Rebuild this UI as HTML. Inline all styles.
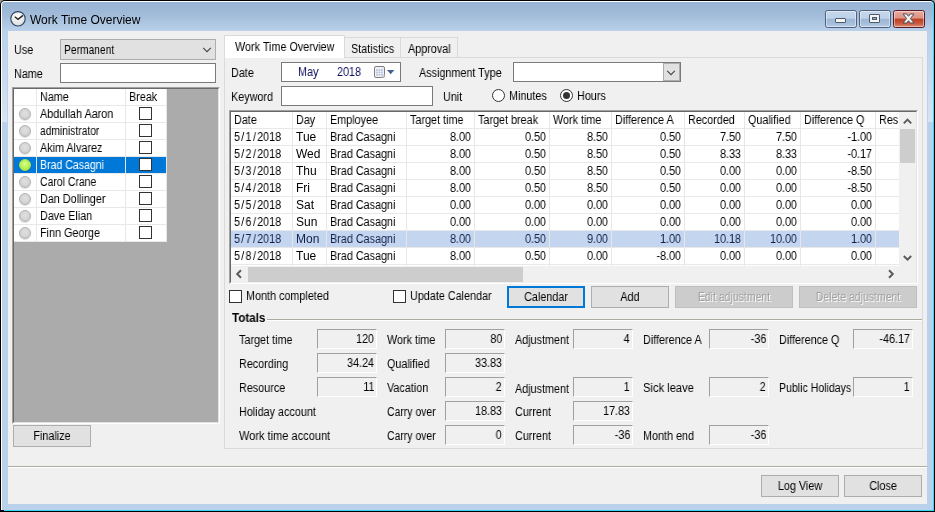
<!DOCTYPE html><html><head><meta charset="utf-8"><title>Work Time Overview</title><style>
html,body{margin:0;padding:0;}
body{width:935px;height:512px;overflow:hidden;background:#9a9a9a;position:relative;font-family:"Liberation Sans",sans-serif;font-size:11px;color:#000;}
div,span{position:absolute;box-sizing:border-box;white-space:nowrap;}
.t{will-change:transform;line-height:13px;height:13px;font-size:12px;transform:scaleX(.9);transform-origin:0 50%;}
.r{text-align:right;transform-origin:100% 50%;}
.c{text-align:center;transform-origin:50% 50%;left:0;width:100%;}
.btn{background:#e1e1e1;border:1px solid #adadad;}
.btn .t{top:4px;}
.t i{font-style:normal;margin:0 1.4px;}
.dis{background:#cccccc;border:1px solid #bfbfbf;color:#a0a0a0;text-shadow:1px 1px 0 #fff;}
.dis .t{transform:scaleX(.875);}
.sunk .t{right:2px;top:3px;}
.sunk{background:#f0f0f0;border-top:1px solid #a0a0a0;border-left:1px solid #a0a0a0;border-bottom:1px solid #fff;border-right:1px solid #fff;text-align:right;padding-right:3px;height:20px;width:60px;}
.inp{background:#fff;border:1px solid #7a7a7a;}
.cb{width:13px;height:13px;background:#fff;border:1px solid #333;}
.vl{width:1px;background:#e6e6e6;}
.hl{height:1px;background:#e8e8e8;}
.dot{width:12px;height:12px;border-radius:50%;background:radial-gradient(circle at 50% 42%,#e0e0e0 0,#d6d6d6 50%,#c0c0c0 100%);border:1px solid #b3b3b3;box-shadow:0 1px 1px rgba(0,0,0,.12);}
</style></head><body>
<div style="left:0;top:0;width:935px;height:512px;background:#000;border-radius:5px 5px 0 0;"></div>
<div style="left:4px;top:1px;width:930px;height:510px;background:#37d7fa;border-radius:0 4px 0 0;"></div>
<div style="left:1px;top:1px;width:932px;height:509px;background:#fff;border-radius:4px 4px 0 0;"></div>
<div style="left:2px;top:2px;width:931px;height:508px;background:linear-gradient(#98b3d4 0,#a1bbd9 13px,#b9d1ea 29px,#b9d1ea 100%);border-radius:3px 3px 0 0;"></div>
<div style="left:2px;top:31px;width:5px;height:91px;background:linear-gradient(rgba(255,255,255,0),rgba(255,255,255,.42));"></div>
<div style="left:928px;top:31px;width:5px;height:91px;background:linear-gradient(rgba(255,255,255,0),rgba(255,255,255,.42));"></div>
<div style="left:8px;top:31px;width:919px;height:473px;background:#f0f0f0;"></div>
<svg style="position:absolute;left:9px;top:10px" width="18" height="18" viewBox="0 0 18 18"><defs><radialGradient id="cg" cx="50%" cy="35%" r="70%"><stop offset="0" stop-color="#fff"/><stop offset="1" stop-color="#d8d8d8"/></radialGradient></defs><circle cx="9" cy="8.8" r="7.2" fill="url(#cg)" stroke="#2b4560" stroke-width="1.1"/><path d="M5.8 6.8 L9 9.3 L14 5.4" fill="none" stroke="#222" stroke-width="1.4"/></svg>
<div class="t" style="left:30px;top:12px;font-size:12px;line-height:16px;height:16px;transform:none;">Work Time Overview</div>
<div style="left:825px;top:10px;width:32px;height:18px;border:1px solid #50607c;border-radius:2.5px;background:linear-gradient(#c4d7ec 0,#bdd1e9 46%,#9cb6d6 50%,#a5bedb 78%,#b7cde7 100%);box-shadow:inset 0 0 0 1px rgba(255,255,255,.45);"></div>
<div style="left:859px;top:10px;width:32px;height:18px;border:1px solid #50607c;border-radius:2.5px;background:linear-gradient(#c4d7ec 0,#bdd1e9 46%,#9cb6d6 50%,#a5bedb 78%,#b7cde7 100%);box-shadow:inset 0 0 0 1px rgba(255,255,255,.45);"></div>
<div style="left:893px;top:10px;width:32px;height:18px;border:1px solid #5a1a24;border-radius:2.5px;background:linear-gradient(#e9a99b 0,#dd9384 45%,#c03e22 50%,#c8553a 75%,#d98a74 100%);box-shadow:inset 0 0 0 1px rgba(255,255,255,.45);"></div>
<div style="left:835px;top:18px;width:11px;height:5px;background:#f4f4f4;border:1px solid #4c5a6c;border-radius:1px;"></div>
<div style="left:869px;top:14px;width:11px;height:9px;background:#f4f4f4;border:1px solid #4c5a6c;border-radius:1px;"></div>
<div style="left:872px;top:17px;width:5px;height:3px;background:#8eabcd;border:1px solid #4c5a6c;"></div>
<svg style="position:absolute;left:902px;top:13px" width="14" height="12" viewBox="0 0 14 12"><path d="M1 1 h3.7 l1.8 2.3 l1.8 -2.3 h3.7 l-3.6 4.5 l3.6 4.5 h-3.7 l-1.8 -2.3 l-1.8 2.3 h-3.7 l3.6 -4.5 z" fill="#f6f6f6" stroke="#4a4f60" stroke-width="1"/></svg>
<div class="t" style="left:14px;top:44px;">Use</div>
<div style="left:60px;top:39px;width:156px;height:21px;background:#e1e1e1;border:1px solid #adadad;"></div>
<div class="t" style="left:64px;top:44px;transform:scaleX(.855);">Permanent</div>
<svg style="position:absolute;left:202px;top:46px" width="11" height="7" viewBox="0 0 11 7"><path d="M1.2 1.8 L5 5.6 L8.8 1.8" fill="none" stroke="#444" stroke-width="1.1"/></svg>
<div class="t" style="left:14px;top:68px;">Name</div>
<div class="inp" style="left:60px;top:63px;width:156px;height:20px;"></div>
<div style="left:12px;top:87px;width:208px;height:337px;background:#ababab;border-top:1px solid #a0a0a0;border-left:1px solid #a0a0a0;border-bottom:1px solid #fff;border-right:1px solid #fff;"></div>
<div style="left:13px;top:88px;width:206px;height:335px;border-top:1px solid #696969;border-left:1px solid #696969;border-bottom:1px solid #e3e3e3;border-right:1px solid #e3e3e3;"></div>
<div style="left:14px;top:89px;width:153px;height:153px;background:#fff;"></div>
<div style="left:14px;top:157px;width:152px;height:16px;background:#0078d7;"></div>
<div class="vl" style="left:36px;top:89px;height:153px;"></div>
<div class="vl" style="left:125px;top:89px;height:153px;"></div>
<div class="vl" style="left:166px;top:89px;height:153px;"></div>
<div class="hl" style="left:14px;top:105px;width:153px;"></div>
<div class="hl" style="left:14px;top:122px;width:153px;"></div>
<div class="hl" style="left:14px;top:139px;width:153px;"></div>
<div class="hl" style="left:14px;top:156px;width:153px;"></div>
<div class="hl" style="left:14px;top:173px;width:153px;"></div>
<div class="hl" style="left:14px;top:190px;width:153px;"></div>
<div class="hl" style="left:14px;top:207px;width:153px;"></div>
<div class="hl" style="left:14px;top:224px;width:153px;"></div>
<div class="hl" style="left:14px;top:241px;width:153px;"></div>
<div class="t" style="left:40px;top:91px;">Name</div>
<div class="t" style="left:129px;top:91px;">Break</div>
<div class="dot" style="left:19px;top:108px;"></div>
<div class="t" style="left:40px;top:108px;">Abdullah Aaron</div>
<div class="cb" style="left:139px;top:107px;"></div>
<div class="dot" style="left:19px;top:125px;"></div>
<div class="t" style="left:40px;top:125px;transform:scaleX(.856);">administrator</div>
<div class="cb" style="left:139px;top:124px;"></div>
<div class="dot" style="left:19px;top:142px;"></div>
<div class="t" style="left:40px;top:142px;">Akim Alvarez</div>
<div class="cb" style="left:139px;top:141px;"></div>
<div class="dot" style="left:19px;top:159px;background:radial-gradient(circle at 50% 40%,#d8ff8a 0,#b6f04e 60%,#98d934 100%);border-color:#a8e04a;"></div>
<div class="t" style="left:40px;top:159px;color:#fff;transform:scaleX(.88);">Brad Casagni</div>
<div class="cb" style="left:139px;top:158px;"></div>
<div class="dot" style="left:19px;top:176px;"></div>
<div class="t" style="left:40px;top:176px;transform:scaleX(.87);">Carol Crane</div>
<div class="cb" style="left:139px;top:175px;"></div>
<div class="dot" style="left:19px;top:193px;"></div>
<div class="t" style="left:40px;top:193px;">Dan Dollinger</div>
<div class="cb" style="left:139px;top:192px;"></div>
<div class="dot" style="left:19px;top:210px;"></div>
<div class="t" style="left:40px;top:210px;">Dave Elian</div>
<div class="cb" style="left:139px;top:209px;"></div>
<div class="dot" style="left:19px;top:227px;"></div>
<div class="t" style="left:40px;top:227px;">Finn George</div>
<div class="cb" style="left:139px;top:226px;"></div>
<div class="btn" style="left:13px;top:425px;width:78px;height:22px;"><span class="t c">Finalize</span></div>
<div style="left:224px;top:57px;width:699px;height:392px;background:#f0f0f0;border:1px solid #dadada;"></div>
<div style="left:344px;top:37px;width:57px;height:21px;background:#f0f0f0;border:1px solid #dadada;"></div>
<div style="left:400px;top:37px;width:58px;height:21px;background:#f0f0f0;border:1px solid #dadada;"></div>
<div style="left:224px;top:35px;width:121px;height:23px;background:#fff;border:1px solid #dadada;border-bottom:none;"></div>
<div class="t" style="left:235px;top:41px;">Work Time Overview</div>
<div class="t" style="left:351px;top:43px;">Statistics</div>
<div class="t" style="left:408px;top:43px;">Approval</div>
<div class="t" style="left:231px;top:67px;">Date</div>
<div class="inp" style="left:281px;top:62px;width:120px;height:20px;"></div>
<div class="t" style="left:298px;top:66px;color:#0c0c5c;">May</div>
<div class="t" style="left:337px;top:66px;color:#0c0c5c;">2018</div>
<svg style="position:absolute;left:373px;top:65px" width="24" height="14" viewBox="0 0 24 14"><rect x="1.5" y="1.5" width="10" height="11" rx="1.5" fill="#eef1f8" stroke="#857a7c"/><rect x="3.2" y="4.2" width="6.6" height="6.3" fill="#b3c0da"/><path d="M5.3 4v7M7.6 4v7M3 6.3h7M3 8.4h7" stroke="#eef1f8" stroke-width=".8"/><path d="M8 12.5 L11.5 9 V12.5 Z" fill="#cfc8c8"/><path d="M14 5 h7.4 l-3.7 4.2 z" fill="#44608f"/></svg>
<div class="t" style="left:419px;top:67px;">Assignment Type</div>
<div class="inp" style="left:513px;top:62px;width:168px;height:20px;"></div>
<div style="left:663px;top:63px;width:17px;height:18px;background:#e1e1e1;border:1px solid #adadad;"></div>
<svg style="position:absolute;left:666px;top:69px" width="11" height="7" viewBox="0 0 11 7"><path d="M1.2 1.8 L5 5.6 L8.8 1.8" fill="none" stroke="#444" stroke-width="1.1"/></svg>
<div class="t" style="left:231px;top:91px;">Keyword</div>
<div class="inp" style="left:281px;top:86px;width:152px;height:20px;"></div>
<div class="t" style="left:443px;top:91px;">Unit</div>
<div style="left:492px;top:89px;width:13px;height:13px;border-radius:50%;background:#fff;border:1px solid #333;"></div>
<div class="t" style="left:509px;top:90px;">Minutes</div>
<div style="left:560px;top:89px;width:13px;height:13px;border-radius:50%;background:#fff;border:1px solid #333;"></div>
<div style="left:563px;top:92px;width:7px;height:7px;border-radius:50%;background:#333;"></div>
<div class="t" style="left:577px;top:90px;">Hours</div>
<div style="left:229px;top:110px;width:689px;height:174px;background:#fff;border-top:1px solid #a0a0a0;border-left:1px solid #a0a0a0;border-bottom:1px solid #fff;border-right:1px solid #fff;"></div>
<div style="left:230px;top:111px;width:687px;height:172px;border-top:1px solid #696969;border-left:1px solid #696969;border-bottom:1px solid #e3e3e3;border-right:1px solid #e3e3e3;"></div>
<div style="left:231px;top:231px;width:668px;height:16px;background:#c4d5f0;"></div>
<div class="vl" style="left:292px;top:112px;height:154px;"></div>
<div class="vl" style="left:326px;top:112px;height:154px;"></div>
<div class="vl" style="left:406px;top:112px;height:154px;"></div>
<div class="vl" style="left:474px;top:112px;height:154px;"></div>
<div class="vl" style="left:549px;top:112px;height:154px;"></div>
<div class="vl" style="left:611px;top:112px;height:154px;"></div>
<div class="vl" style="left:684px;top:112px;height:154px;"></div>
<div class="vl" style="left:744px;top:112px;height:154px;"></div>
<div class="vl" style="left:800px;top:112px;height:154px;"></div>
<div class="vl" style="left:875px;top:112px;height:154px;"></div>
<div class="hl" style="left:231px;top:128px;width:668px;"></div>
<div class="hl" style="left:231px;top:145px;width:668px;"></div>
<div class="hl" style="left:231px;top:162px;width:668px;"></div>
<div class="hl" style="left:231px;top:179px;width:668px;"></div>
<div class="hl" style="left:231px;top:196px;width:668px;"></div>
<div class="hl" style="left:231px;top:213px;width:668px;"></div>
<div class="hl" style="left:231px;top:230px;width:668px;"></div>
<div class="hl" style="left:231px;top:247px;width:668px;"></div>
<div class="hl" style="left:231px;top:264px;width:668px;"></div>
<div class="t" style="left:234px;top:114px;">Date</div>
<div class="t" style="left:296px;top:114px;">Day</div>
<div class="t" style="left:330px;top:114px;">Employee</div>
<div class="t" style="left:410px;top:114px;">Target time</div>
<div class="t" style="left:478px;top:114px;">Target break</div>
<div class="t" style="left:553px;top:114px;">Work time</div>
<div class="t" style="left:615px;top:114px;">Difference A</div>
<div class="t" style="left:688px;top:114px;">Recorded</div>
<div class="t" style="left:748px;top:114px;">Qualified</div>
<div class="t" style="left:804px;top:114px;">Difference Q</div>
<div class="t" style="left:879px;top:114px;">Res</div>
<div class="t" style="left:234px;top:131px;">5<i>/</i>1<i>/</i>2018</div>
<div class="t" style="left:296px;top:131px;transform:none;">Tue</div>
<div class="t" style="left:330px;top:131px;">Brad Casagni</div>
<div class="t r" style="left:407px;top:131px;width:64px;">8.00</div>
<div class="t r" style="left:475px;top:131px;width:71px;">0.50</div>
<div class="t r" style="left:550px;top:131px;width:58px;">8.50</div>
<div class="t r" style="left:612px;top:131px;width:69px;">0.50</div>
<div class="t r" style="left:685px;top:131px;width:56px;">7.50</div>
<div class="t r" style="left:745px;top:131px;width:52px;">7.50</div>
<div class="t r" style="left:801px;top:131px;width:71px;">-1.00</div>
<div class="t" style="left:234px;top:148px;">5<i>/</i>2<i>/</i>2018</div>
<div class="t" style="left:296px;top:148px;transform:none;">Wed</div>
<div class="t" style="left:330px;top:148px;">Brad Casagni</div>
<div class="t r" style="left:407px;top:148px;width:64px;">8.00</div>
<div class="t r" style="left:475px;top:148px;width:71px;">0.50</div>
<div class="t r" style="left:550px;top:148px;width:58px;">8.50</div>
<div class="t r" style="left:612px;top:148px;width:69px;">0.50</div>
<div class="t r" style="left:685px;top:148px;width:56px;">8.33</div>
<div class="t r" style="left:745px;top:148px;width:52px;">8.33</div>
<div class="t r" style="left:801px;top:148px;width:71px;">-0.17</div>
<div class="t" style="left:234px;top:165px;">5<i>/</i>3<i>/</i>2018</div>
<div class="t" style="left:296px;top:165px;transform:none;">Thu</div>
<div class="t" style="left:330px;top:165px;">Brad Casagni</div>
<div class="t r" style="left:407px;top:165px;width:64px;">8.00</div>
<div class="t r" style="left:475px;top:165px;width:71px;">0.50</div>
<div class="t r" style="left:550px;top:165px;width:58px;">8.50</div>
<div class="t r" style="left:612px;top:165px;width:69px;">0.50</div>
<div class="t r" style="left:685px;top:165px;width:56px;">0.00</div>
<div class="t r" style="left:745px;top:165px;width:52px;">0.00</div>
<div class="t r" style="left:801px;top:165px;width:71px;">-8.50</div>
<div class="t" style="left:234px;top:182px;">5<i>/</i>4<i>/</i>2018</div>
<div class="t" style="left:296px;top:182px;transform:none;">Fri</div>
<div class="t" style="left:330px;top:182px;">Brad Casagni</div>
<div class="t r" style="left:407px;top:182px;width:64px;">8.00</div>
<div class="t r" style="left:475px;top:182px;width:71px;">0.50</div>
<div class="t r" style="left:550px;top:182px;width:58px;">8.50</div>
<div class="t r" style="left:612px;top:182px;width:69px;">0.50</div>
<div class="t r" style="left:685px;top:182px;width:56px;">0.00</div>
<div class="t r" style="left:745px;top:182px;width:52px;">0.00</div>
<div class="t r" style="left:801px;top:182px;width:71px;">-8.50</div>
<div class="t" style="left:234px;top:199px;">5<i>/</i>5<i>/</i>2018</div>
<div class="t" style="left:296px;top:199px;transform:none;">Sat</div>
<div class="t" style="left:330px;top:199px;">Brad Casagni</div>
<div class="t r" style="left:407px;top:199px;width:64px;">0.00</div>
<div class="t r" style="left:475px;top:199px;width:71px;">0.00</div>
<div class="t r" style="left:550px;top:199px;width:58px;">0.00</div>
<div class="t r" style="left:612px;top:199px;width:69px;">0.00</div>
<div class="t r" style="left:685px;top:199px;width:56px;">0.00</div>
<div class="t r" style="left:745px;top:199px;width:52px;">0.00</div>
<div class="t r" style="left:801px;top:199px;width:71px;">0.00</div>
<div class="t" style="left:234px;top:216px;">5<i>/</i>6<i>/</i>2018</div>
<div class="t" style="left:296px;top:216px;transform:none;">Sun</div>
<div class="t" style="left:330px;top:216px;">Brad Casagni</div>
<div class="t r" style="left:407px;top:216px;width:64px;">0.00</div>
<div class="t r" style="left:475px;top:216px;width:71px;">0.00</div>
<div class="t r" style="left:550px;top:216px;width:58px;">0.00</div>
<div class="t r" style="left:612px;top:216px;width:69px;">0.00</div>
<div class="t r" style="left:685px;top:216px;width:56px;">0.00</div>
<div class="t r" style="left:745px;top:216px;width:52px;">0.00</div>
<div class="t r" style="left:801px;top:216px;width:71px;">0.00</div>
<div class="t" style="left:234px;top:233px;color:#10204a;">5<i>/</i>7<i>/</i>2018</div>
<div class="t" style="left:296px;top:233px;transform:none;color:#10204a;">Mon</div>
<div class="t" style="left:330px;top:233px;color:#10204a;">Brad Casagni</div>
<div class="t r" style="left:407px;top:233px;width:64px;color:#10204a;">8.00</div>
<div class="t r" style="left:475px;top:233px;width:71px;color:#10204a;">0.50</div>
<div class="t r" style="left:550px;top:233px;width:58px;color:#10204a;">9.00</div>
<div class="t r" style="left:612px;top:233px;width:69px;color:#10204a;">1.00</div>
<div class="t r" style="left:685px;top:233px;width:56px;color:#10204a;">10.18</div>
<div class="t r" style="left:745px;top:233px;width:52px;color:#10204a;">10.00</div>
<div class="t r" style="left:801px;top:233px;width:71px;color:#10204a;">1.00</div>
<div class="t" style="left:234px;top:250px;">5<i>/</i>8<i>/</i>2018</div>
<div class="t" style="left:296px;top:250px;transform:none;">Tue</div>
<div class="t" style="left:330px;top:250px;">Brad Casagni</div>
<div class="t r" style="left:407px;top:250px;width:64px;">8.00</div>
<div class="t r" style="left:475px;top:250px;width:71px;">0.50</div>
<div class="t r" style="left:550px;top:250px;width:58px;">0.00</div>
<div class="t r" style="left:612px;top:250px;width:69px;">-8.00</div>
<div class="t r" style="left:685px;top:250px;width:56px;">0.00</div>
<div class="t r" style="left:745px;top:250px;width:52px;">0.00</div>
<div class="t r" style="left:801px;top:250px;width:71px;">0.00</div>
<div style="left:899px;top:112px;width:17px;height:171px;background:#f0f0f0;"></div>
<div style="left:231px;top:266px;width:685px;height:17px;background:#f0f0f0;"></div>
<div style="left:900px;top:129px;width:15px;height:34px;background:#cdcdcd;"></div>
<div style="left:248px;top:267px;width:275px;height:15px;background:#cdcdcd;"></div>
<svg style="position:absolute;left:902px;top:116px" width="10" height="10" viewBox="0 0 10 10"><path d="M1.8 7.3 L5.5 3.6 L9.2 7.3" fill="none" stroke="#5a5a5a" stroke-width="1.9"/></svg>
<svg style="position:absolute;left:902px;top:253px" width="10" height="10" viewBox="0 0 10 10"><path d="M1.8 3 L5.5 6.7 L9.2 3" fill="none" stroke="#5a5a5a" stroke-width="1.9"/></svg>
<svg style="position:absolute;left:234px;top:269px" width="10" height="10" viewBox="0 0 10 10"><path d="M7 1.3 L3.2 5 L7 8.7" fill="none" stroke="#5a5a5a" stroke-width="1.9"/></svg>
<svg style="position:absolute;left:886px;top:269px" width="10" height="10" viewBox="0 0 10 10"><path d="M3 1.3 L6.8 5 L3 8.7" fill="none" stroke="#5a5a5a" stroke-width="1.9"/></svg>
<div class="cb" style="left:229px;top:290px;"></div>
<div class="t" style="left:246px;top:290px;">Month completed</div>
<div class="cb" style="left:393px;top:290px;"></div>
<div class="t" style="left:410px;top:290px;">Update Calendar</div>
<div class="btn" style="left:507px;top:286px;width:78px;height:22px;border:2px solid #0078d7;"><span class="t c" style="top:3px">Calendar</span></div>
<div class="btn" style="left:591px;top:286px;width:78px;height:22px;"><span class="t c">Add</span></div>
<div class="btn dis" style="left:675px;top:286px;width:118px;height:22px;"><span class="t c">Edit adjustment</span></div>
<div class="btn dis" style="left:799px;top:286px;width:118px;height:22px;"><span class="t c">Delete adjustment</span></div>
<div style="left:267px;top:319px;width:655px;height:2px;border-top:1px solid #aeab9f;border-bottom:1px solid #fff;"></div>
<div class="t" style="left:232px;top:312px;font-weight:bold;transform:scaleX(.97);">Totals</div>
<div class="t" style="left:239px;top:334px;">Target time</div>
<div class="sunk" style="left:317px;top:329px;"><span class="t r">120</span></div>
<div class="t" style="left:387px;top:334px;">Work time</div>
<div class="sunk" style="left:445px;top:329px;"><span class="t r">80</span></div>
<div class="t" style="left:515px;top:334px;">Adjustment</div>
<div class="sunk" style="left:573px;top:329px;"><span class="t r">4</span></div>
<div class="t" style="left:643px;top:334px;">Difference A</div>
<div class="sunk" style="left:709px;top:329px;"><span class="t r">-36</span></div>
<div class="t" style="left:779px;top:334px;">Difference Q</div>
<div class="sunk" style="left:853px;top:329px;"><span class="t r">-46.17</span></div>
<div class="t" style="left:239px;top:358px;">Recording</div>
<div class="sunk" style="left:317px;top:353px;"><span class="t r">34.24</span></div>
<div class="t" style="left:387px;top:358px;">Qualified</div>
<div class="sunk" style="left:445px;top:353px;"><span class="t r">33.83</span></div>
<div class="t" style="left:239px;top:382px;">Resource</div>
<div class="sunk" style="left:317px;top:377px;"><span class="t r">11</span></div>
<div class="t" style="left:387px;top:382px;">Vacation</div>
<div class="sunk" style="left:445px;top:377px;"><span class="t r">2</span></div>
<div class="t" style="left:515px;top:383px;">Adjustment</div>
<div class="sunk" style="left:573px;top:377px;"><span class="t r">1</span></div>
<div class="t" style="left:643px;top:382px;transform:scaleX(.93);">Sick leave</div>
<div class="sunk" style="left:709px;top:377px;"><span class="t r">2</span></div>
<div class="t" style="left:779px;top:382px;transform:scaleX(.88);">Public Holidays</div>
<div class="sunk" style="left:853px;top:377px;"><span class="t r">1</span></div>
<div class="t" style="left:239px;top:406px;">Holiday account</div>
<div class="t" style="left:387px;top:406px;transform:scaleX(.87);">Carry over</div>
<div class="sunk" style="left:445px;top:401px;"><span class="t r">18.83</span></div>
<div class="t" style="left:515px;top:406px;">Current</div>
<div class="sunk" style="left:573px;top:401px;"><span class="t r">17.83</span></div>
<div class="t" style="left:239px;top:430px;transform:scaleX(.92);">Work time account</div>
<div class="t" style="left:387px;top:430px;transform:scaleX(.87);">Carry over</div>
<div class="sunk" style="left:445px;top:425px;"><span class="t r">0</span></div>
<div class="t" style="left:515px;top:430px;">Current</div>
<div class="sunk" style="left:573px;top:425px;"><span class="t r">-36</span></div>
<div class="t" style="left:643px;top:430px;">Month end</div>
<div class="sunk" style="left:709px;top:425px;"><span class="t r">-36</span></div>
<div style="left:8px;top:466px;width:919px;height:2px;border-top:1px solid #aeab9f;border-bottom:1px solid #fff;"></div>
<div class="btn" style="left:761px;top:475px;width:78px;height:22px;"><span class="t c">Log View</span></div>
<div class="btn" style="left:844px;top:475px;width:78px;height:22px;"><span class="t c">Close</span></div>
</body></html>
